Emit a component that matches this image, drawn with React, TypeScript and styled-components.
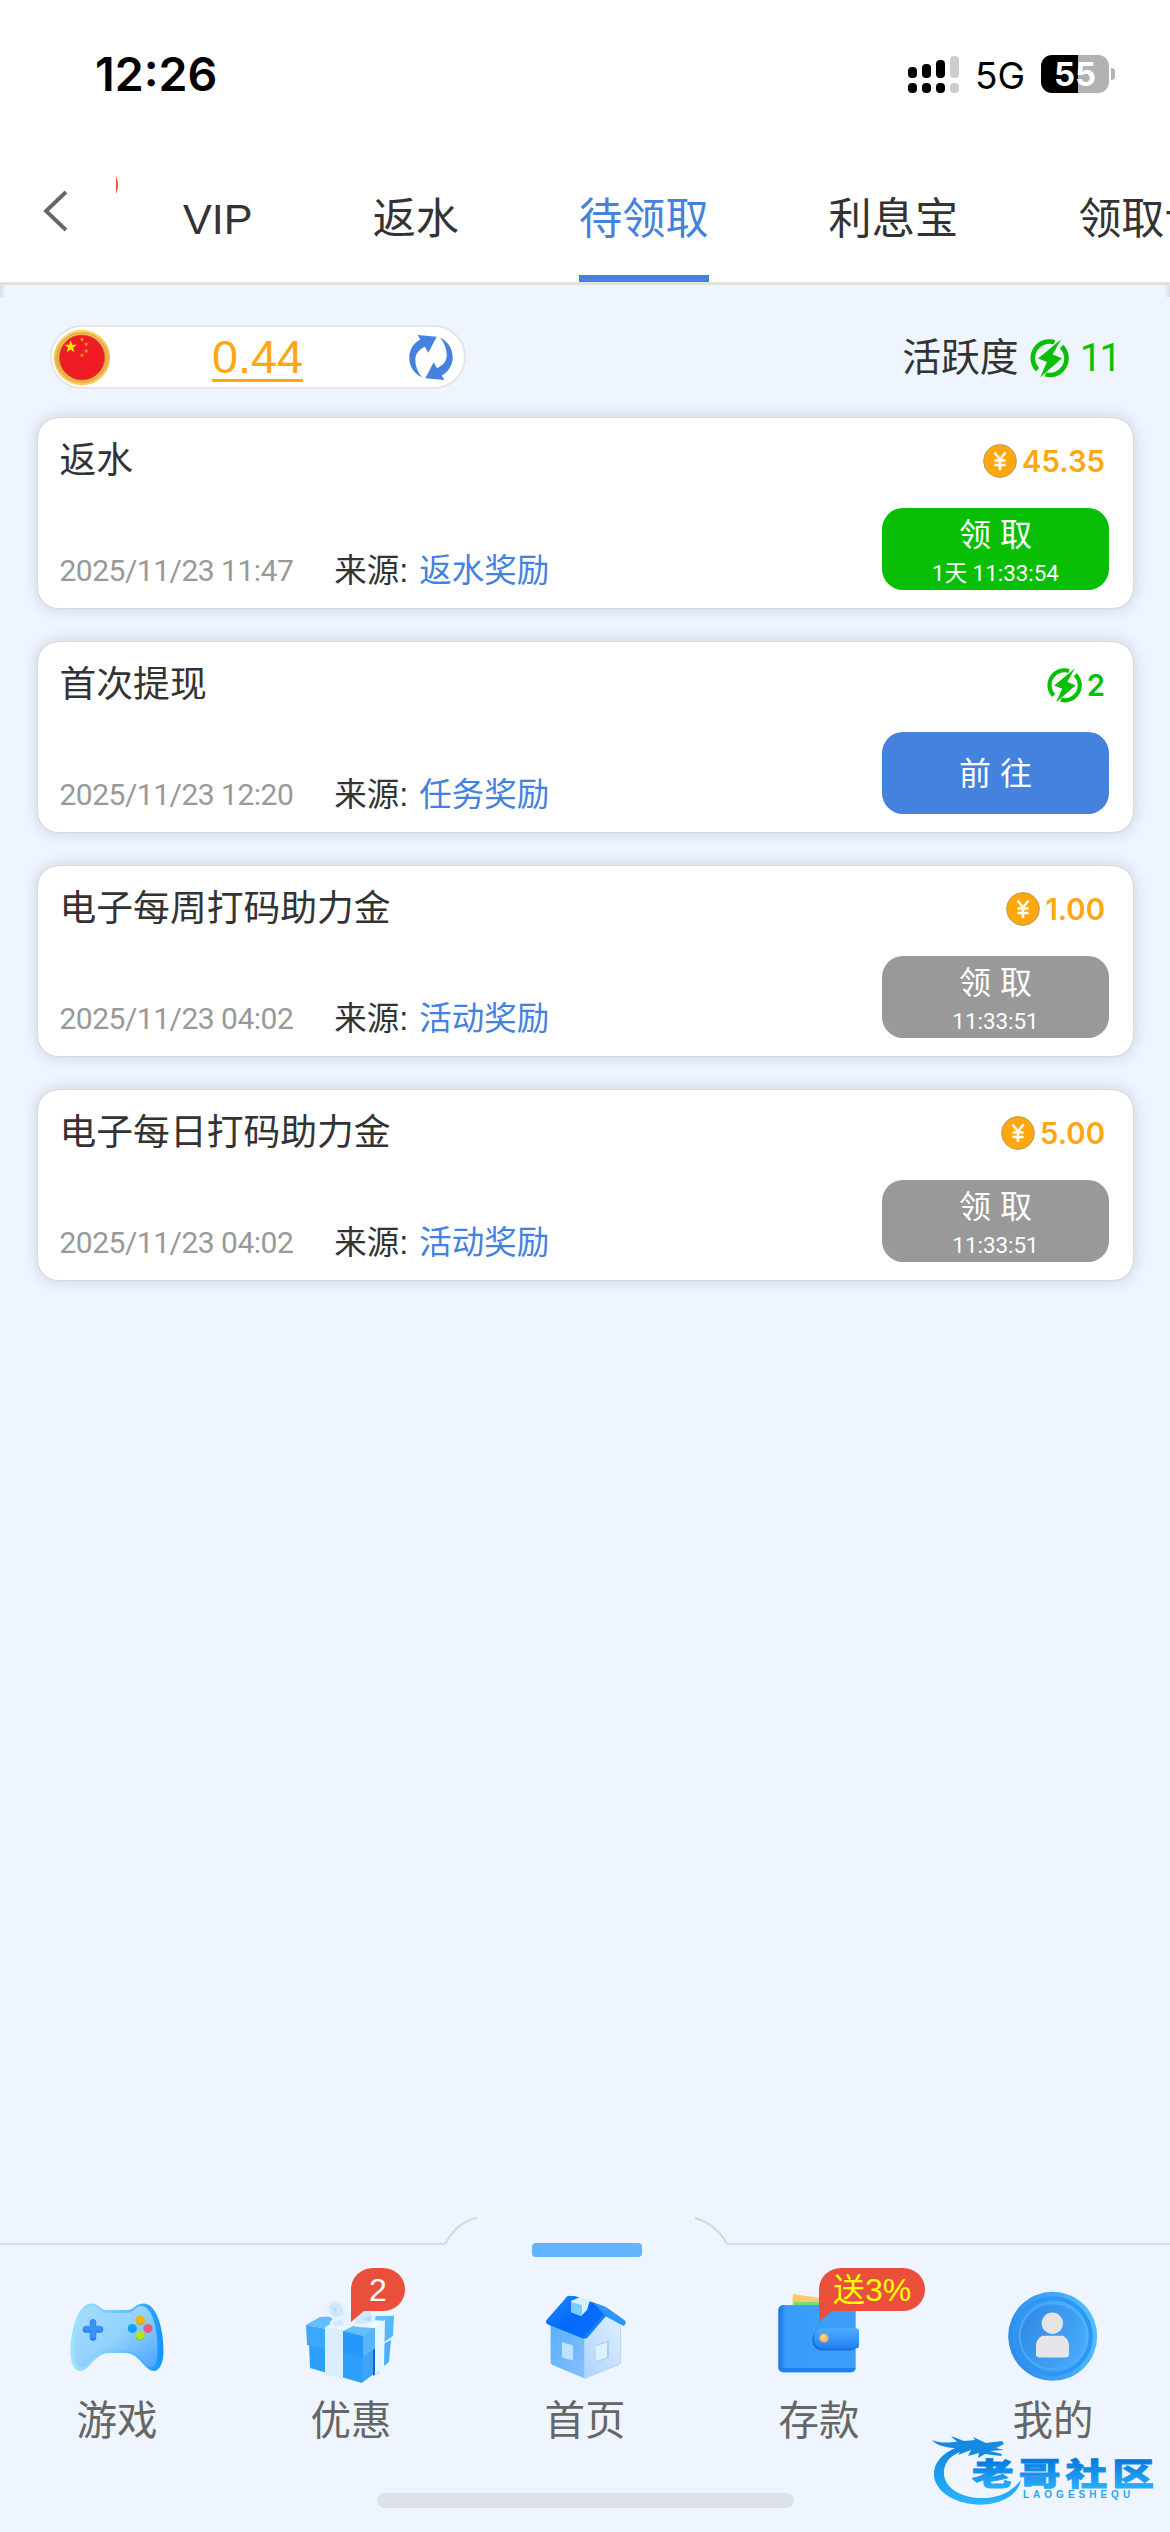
import React from "react"
import styled, { createGlobalStyle } from "styled-components"

type ButtonKind = "claim" | "go" | "disabled"

interface Reward {
  title: string
  date: string
  source: string
  amount: string
  unit: "coin" | "active"
  button: string
  kind: ButtonKind
  countdown?: string
}

const rewards: Reward[] = [
  { title: "返水", date: "2025/11/23 11:47", source: "返水奖励", amount: "45.35", unit: "coin", button: "领 取", kind: "claim", countdown: "1天 11:33:54" },
  { title: "首次提现", date: "2025/11/23 12:20", source: "任务奖励", amount: "2", unit: "active", button: "前 往", kind: "go" },
  { title: "电子每周打码助力金", date: "2025/11/23 04:02", source: "活动奖励", amount: "1.00", unit: "coin", button: "领 取", kind: "disabled", countdown: "11:33:51" },
  { title: "电子每日打码助力金", date: "2025/11/23 04:02", source: "活动奖励", amount: "5.00", unit: "coin", button: "领 取", kind: "disabled", countdown: "11:33:51" },
]

const tabs = ["VIP", "返水", "待领取", "利息宝", "领取记录"]

const buttonColors = { claim: "#08bf05", go: "#4482de", disabled: "#999999" }

const SignalIcon = () => (
  <svg width="52" height="38" viewBox="0 0 52 38">
    <g fill="#000">
      <rect x="0" y="12" width="9" height="11" rx="4" />
      <rect x="14" y="9" width="9" height="14" rx="4" />
      <rect x="28" y="5" width="9" height="18" rx="4" />
      <rect x="0" y="28" width="9" height="10" rx="4" />
      <rect x="14" y="28" width="9" height="10" rx="4" />
      <rect x="28" y="28" width="9" height="10" rx="4" />
    </g>
    <g fill="#ccc">
      <rect x="42" y="1" width="9" height="22" rx="4" />
      <rect x="42" y="28" width="9" height="10" rx="4" />
    </g>
  </svg>
)

const BoltIcon = ({ size }: { size: number }) => (
  <svg width={size} height={size} viewBox="0 0 39 38">
    <g fill="none" stroke="#08bf05" strokeWidth="4.6">
      <path d="M24.500 2.8A16.6 16.6 0 0 0 7.500 30.2" />
      <path d="M31.500 7A16.6 16.6 0 0 1 15.500 34.9" />
    </g>
    <path d="M31 0L8 19L17 22.5L10 38L32 18.8L22.6 15Z" fill="#08bf05" />
  </svg>
)

const CoinIcon = () => (
  <svg width="34" height="34" viewBox="0 0 34 34">
    <circle cx="17" cy="17" r="16.4" fill="#ffa70f" stroke="#b99a5c" strokeWidth="1" />
    <path d="M11.5 8.500L17 15.500L22.5 8.500M17 15.500V26M11.5 16.500H22.5M11.5 21H22.5" fill="none" stroke="#fff" strokeWidth="2.5" />
  </svg>
)

const star = (cx: number, cy: number, r: number) =>
  Array.from({ length: 10 }, (_, i) => {
    const a = (Math.PI / 5) * i - Math.PI / 2
    const d = i % 2 ? r * 0.4 : r
    return `${cx + Math.cos(a) * d},${cy + Math.sin(a) * d}`
  }).join(" ")

const FlagIcon = () => (
  <svg width="56" height="57" viewBox="0 0 56 57">
    <defs>
      <linearGradient id="gold" x1="0" y1="0" x2="0" y2="1">
        <stop offset="0" stopColor="#fbdc72" />
        <stop offset="0.5" stopColor="#f0b64f" />
        <stop offset="1" stopColor="#fbcf62" />
      </linearGradient>
    </defs>
    <circle cx="28" cy="28.5" r="28" fill="url(#gold)" />
    <circle cx="28" cy="28.5" r="24.8" fill="none" stroke="#e8a63f" strokeWidth="1.6" />
    <circle cx="28" cy="28.5" r="22.6" fill="#ef1c25" stroke="#b86a25" strokeWidth="0.9" />
    <g fill="#ffe800">
      <polygon points={star(16.6, 17.8, 6.6)} />
      <polygon points={star(28, 10.6, 2.4)} fill="#f9a01b" />
      <polygon points={star(32.2, 15.2, 2.4)} fill="#f9a01b" />
      <polygon points={star(32.2, 22, 2.4)} fill="#f9a01b" />
      <polygon points={star(28, 26.4, 2.4)} fill="#f9a01b" />
    </g>
  </svg>
)

const refreshArrow = "M13 42.3C4.5 38.5 0.3 31 0.3 22.5C0.3 15 4.5 8 11.3 4.4L8.7 0L27.7 1.7L19.3 17.7L16 11.8C10 14.5 6.4 19 6.3 24.5C6.2 31 8.5 37 13 42.3Z"

const RefreshIcon = () => (
  <svg width="44" height="45" viewBox="0 0 44 45" fill="#4482de">
    <path d={refreshArrow} />
    <path d={refreshArrow} transform="rotate(180 22 22.5)" />
  </svg>
)

const GameIcon = () => (
  <svg width="100" height="100" viewBox="0 0 100 100">
    <defs>
      <linearGradient id="pad" x1="0" y1="0" x2="1" y2="1">
        <stop offset="0" stopColor="#a4defc" />
        <stop offset="0.5" stopColor="#93d2fd" />
        <stop offset="1" stopColor="#4aa6fe" />
      </linearGradient>
      <linearGradient id="padEdge" x1="0" y1="0" x2="1" y2="0">
        <stop offset="0" stopColor="#a2e3fb" />
        <stop offset="0.6" stopColor="#6cc0fd" />
        <stop offset="1" stopColor="#0f93ff" />
      </linearGradient>
    </defs>
    <path d="M24 15.5C32 15.5 33 22 40 22H60C67 22 68 15.5 77 15.5C91 16 97 45 96.500 65C96 76 92 83 87 83C77 83 73 65 58 65H42C28 65 22 83 14 83C7 83 4 76 3.500 66C3 45 10 16 24 15.500Z" fill="url(#padEdge)" />
    <path d="M25 18C32 18 32 25 40 25H60C67 25 68 18 74 18C87 19 91 45 90.500 63C90 74 88 79 84 79C76 79 73 62 58 62H42C27 62 22 79 14 79C9 79 7.500 73 7.500 65C7.500 45 13 19 25 18Z" fill="url(#pad)" />
    <path d="M26 34.500V49.500M19 41.500H33" stroke="#237fea" strokeWidth="6.500" strokeLinecap="round" />
    <path d="M26 34V47.500M19.500 40.500H32.500" stroke="#3a93f4" strokeWidth="5.500" strokeLinecap="round" />
    <circle cx="73.300" cy="32.500" r="4.600" fill="#d6a20e" />
    <circle cx="73.300" cy="31.500" r="4.300" fill="#f2b619" />
    <circle cx="65.300" cy="40.500" r="4.600" fill="#11a2f6" />
    <circle cx="81" cy="40.500" r="4.600" fill="#ec5b80" />
    <circle cx="73.300" cy="48" r="4.600" fill="#86cc20" />
    <circle cx="73.300" cy="47" r="4.200" fill="#b3e61f" />
  </svg>
)

const GiftIcon = () => (
  <svg width="100" height="100" viewBox="0 0 100 100">
    <path d="M8 55L61 67V95L9 80Z" fill="#2c9ffb" />
    <path d="M61 67L90 52L88 74L61 95Z" fill="#49aefc" />
    <path d="M61 67L74 60V85L61 94Z" fill="#3da4f7" />
    <path d="M72 61L78 57V84L72 88Z" fill="#1267d8" />
    <path d="M5 37L19 29L42 28L93 28L70 45L62 48Z" fill="#62bdfd" />
    <path d="M5 37L62 48V68L6 57Z" fill="#3aa8ff" />
    <path d="M41 43L62 48V70L41 64Z" fill="#2599fb" />
    <path d="M62 48L93 27L92 48L62 69Z" fill="#57b5fb" />
    <path d="M24 39L42 43V91L24 86Z" fill="#dceefe" />
    <path d="M74 40L84 32L83 79L74 87Z" fill="#e6f6ff" />
    <path d="M24 39L40 31L58 35L42 43Z" fill="#eef8ff" />
    <path d="M57 39L72 32L84 33L74 40Z" fill="#f2faff" />
    <g fill="#cfe8fc" stroke="#e6f4fe" strokeWidth="3">
      <path d="M42 31C28 33 23 20 29 14C36 9 45 16 44 27Z" />
      <path d="M52 32C57 20 68 18 72 26C76 33 67 39 54 37Z" />
      <path d="M41 29C34 31 28 34 31 38C37 42 48 36 52 32Z" />
    </g>
    <path d="M31 19L36 20L35 26Z" fill="#b2dbf9" />
    <path d="M62 31L70 27L70 34Z" fill="#b0dbf9" />
    <circle cx="48" cy="31" r="7" fill="#e4f3fe" />
  </svg>
)

const HomeIcon = () => (
  <svg width="100" height="100" viewBox="0 0 100 100">
    <defs>
      <linearGradient id="wallL" x1="0" y1="0" x2="1" y2="1">
        <stop offset="0" stopColor="#57b1fb" />
        <stop offset="1" stopColor="#86bfff" />
      </linearGradient>
      <linearGradient id="wallR" x1="0" y1="1" x2="1" y2="0">
        <stop offset="0" stopColor="#afd3ff" />
        <stop offset="1" stopColor="#def0ff" />
      </linearGradient>
      <linearGradient id="roof" x1="0" y1="0" x2="1" y2="1">
        <stop offset="0" stopColor="#1f8bff" />
        <stop offset="0.5" stopColor="#0568fb" />
        <stop offset="1" stopColor="#0a73fa" />
      </linearGradient>
    </defs>
    <path d="M15.600 36L49.700 49V90.500L17.500 77Q15.600 76 15.600 74Z" fill="url(#wallL)" />
    <path d="M49.700 49L69 26L85.600 36V73Q85.600 76 83 77L49.700 90.500Z" fill="url(#wallR)" />
    <path d="M49.700 90.500L83 77Q85.600 76 85.600 73V38" fill="none" stroke="#bad5f0" strokeWidth="1" />
    <path d="M27 54L38 57.500V72.500L27 69.500Z" fill="#bfe3fe" />
    <path d="M61 57L74 52.500V70L61 74.500Z" fill="#a9cefa" />
    <path d="M61 58L72 54.500V69.500L61 73Z" fill="#def1ff" />
    <path d="M36 8Q32 7 30 11L11.500 32Q10 35 13 36.500L48 50.500Q50 51 52 49L70 27.500L68 18L40 8Z" fill="url(#roof)" />
    <path d="M58 15L67 17.500Q69 18 71 19L90 32.500Q92 36 88.500 38L70 28Q66 22 58 15Z" fill="#2c95fb" />
    <path d="M51 49L69.500 27.500" stroke="#1f7dfb" strokeWidth="3" strokeLinecap="round" />
    <path d="M36 13L45 9L55 12L52 22L46 28L36 24Z" fill="#d7f1ff" />
    <path d="M36 14L47 17V28L36 24Z" fill="#7ccbff" />
  </svg>
)

const WalletIcon = () => (
  <svg width="100" height="100" viewBox="0 0 100 100">
    <defs>
      <linearGradient id="wallet" x1="0" y1="0" x2="1" y2="0">
        <stop offset="0" stopColor="#1473e8" />
        <stop offset="0.1" stopColor="#3a9dfb" />
        <stop offset="1" stopColor="#3d9dfb" />
      </linearGradient>
      <linearGradient id="strap" x1="0" y1="0" x2="0" y2="1">
        <stop offset="0" stopColor="#4fabff" />
        <stop offset="1" stopColor="#2180f2" />
      </linearGradient>
    </defs>
    <path d="M24 6L58 11V22H23Z" fill="#ffc86b" />
    <path d="M25 14H80V22H23Z" fill="#74df78" />
    <rect x="9.300" y="17" width="77.400" height="67.500" rx="5" fill="url(#wallet)" />
    <path d="M11 80Q12 84 16 84H82Q86 84 86.500 80Z" fill="#1f7fee" />
    <rect x="43.500" y="42" width="46" height="20.500" rx="9" fill="#176ee0" />
    <path d="M54 40.300H87Q90 40.300 90 44V57Q90 60.500 87 60.500H54Q45 60 45 50.500Q45 41 54 40.300Z" fill="url(#strap)" />
    <circle cx="55" cy="50" r="4.600" fill="#f1b363" />
    <circle cx="54.300" cy="49.300" r="2.600" fill="#ffcf8c" />
  </svg>
)

const ProfileIcon = () => (
  <svg width="100" height="100" viewBox="0 0 100 100">
    <defs>
      <linearGradient id="ring" x1="0" y1="0.300" x2="1" y2="0.100">
        <stop offset="0" stopColor="#2f8eea" />
        <stop offset="0.600" stopColor="#44abfb" />
        <stop offset="1" stopColor="#53c4fb" />
      </linearGradient>
      <linearGradient id="disc" x1="0" y1="0" x2="1" y2="0.500">
        <stop offset="0" stopColor="#2e87e3" />
        <stop offset="1" stopColor="#46a7f8" />
      </linearGradient>
    </defs>
    <circle cx="49.700" cy="48.300" r="44.500" fill="url(#ring)" />
    <circle cx="49.700" cy="48.300" r="38" fill="none" stroke="#2f95f4" strokeWidth="4" />
    <circle cx="49.700" cy="48.300" r="33" fill="url(#disc)" stroke="#49acf9" strokeWidth="2" />
    <path d="M39 47.700H60Q66 51 66 58V66Q66 69.500 62.500 69.500H36.500Q33 69.500 33 66V58Q33 51 39 47.700Z" fill="#e6e6e8" />
    <circle cx="49.300" cy="35.300" r="10.700" fill="#e4e4e6" />
  </svg>
)

const Watermark = () => (
  <WatermarkSvg width="230" height="80" viewBox="0 0 230 80">
    <defs>
      <linearGradient id="mark" gradientUnits="userSpaceOnUse" x1="0" y1="8" x2="0" y2="74">
        <stop offset="0" stopColor="#0a7fe0" />
        <stop offset="1" stopColor="#2bb4fb" />
      </linearGradient>
      <linearGradient id="markText" gradientUnits="userSpaceOnUse" x1="0" y1="30" x2="0" y2="58">
        <stop offset="0" stopColor="#0879de" />
        <stop offset="1" stopColor="#28aefa" />
      </linearGradient>
    </defs>
    <path d="M37 14C14 20 3 32 4 46C6 64 30 76 54 74.500C74 73 88 64 91 50C83 60 72 67 56 68C34 69 16 60 14 45C13 31 24 20 44 20Z" fill="url(#mark)" />
    <path d="M2 10C12 14 20 12 27 12L21 6L34 11L45 10L43 7L56 13L72 11L74 14L66 18L74 20L60 21L72 24L71 26L55 24L48 28L49 23L38 26L41 20L28 25L33 18L22 18C14 17 6 15 2 10Z" fill="#158ae2" />
    <MarkName x="31" y="55.500" transform="scale(1.35 1)" fill="url(#markText)" stroke="url(#markText)">老哥社区</MarkName>
    <MarkLatin x="93" y="68">LAOGESHEQU</MarkLatin>
  </WatermarkSvg>
)

const navItems = [
  { label: "游戏", icon: <GameIcon /> },
  { label: "优惠", icon: <GiftIcon />, badge: "2" },
  { label: "首页", icon: <HomeIcon /> },
  { label: "存款", icon: <WalletIcon />, badge: "送3%", gold: true },
  { label: "我的", icon: <ProfileIcon /> },
]

const RewardCard = ({ reward }: { reward: Reward }) => (
  <Card>
    <CardMain>
      <CardTitle>{reward.title}</CardTitle>
      <CardMeta>
        <CardDate>{reward.date}</CardDate>
        <span>来源:</span>
        <SourceLink>{reward.source}</SourceLink>
      </CardMeta>
    </CardMain>
    <CardSide>
      <Amount $active={reward.unit === "active"}>
        {reward.unit === "coin" ? <CoinIcon /> : <BoltIcon size={35} />}
        {reward.amount}
      </Amount>
      <ActionButton $kind={reward.kind}>
        <ActionText>{reward.button}</ActionText>
        {reward.countdown && <Countdown>{reward.countdown}</Countdown>}
      </ActionButton>
    </CardSide>
  </Card>
)

const App = () => (
  <>
    <GlobalStyle />
    <Page>
      <StatusBar>
        <Clock>12:26</Clock>
        <StatusIcons>
          <SignalIcon />
          <Network>5G</Network>
          <Battery>55</Battery>
        </StatusIcons>
      </StatusBar>

      <TabBar>
        <BackButton>
          <svg width="26" height="42" viewBox="0 0 26 42" fill="none" stroke="#666" strokeWidth="3.8">
            <path d="M23 2L3 21L23 40" />
          </svg>
        </BackButton>
        <TabScroller>
          <HiddenBadge />
          {tabs.map(t => <Tab key={t} $active={t === "待领取"}>{t}</Tab>)}
        </TabScroller>
      </TabBar>

      <Content>
        <Summary>
          <Balance>
            <FlagIcon />
            <BalanceValue>0.44</BalanceValue>
            <RefreshIcon />
          </Balance>
          <Activity>
            <span>活跃度</span>
            <BoltIcon size={39} />
            <ActivityValue>11</ActivityValue>
          </Activity>
        </Summary>
        {rewards.map(r => <RewardCard reward={r} key={r.title} />)}
      </Content>

      <NavBar>
        <Hump width="282" height="28" viewBox="0 0 282 28" fill="none">
          <path d="M0 27C7 14 17 4 32 1" stroke="#d3d8e2" strokeWidth="2" />
          <path d="M32 1H250" stroke="#f5f9ff" strokeWidth="1" />
          <path d="M250 1C264 5 275 14 282 27" stroke="#d3d8e2" strokeWidth="2" />
        </Hump>
        <ActiveMark />
        {navItems.map(n => (
          <NavItem key={n.label}>
            {n.icon}
            <NavLabel>{n.label}</NavLabel>
            {n.badge && <NavBadge $gold={n.gold}>{n.badge}</NavBadge>}
          </NavItem>
        ))}
        <HomeIndicator />
        <Watermark />
      </NavBar>
    </Page>
  </>
)

export default App


const GlobalStyle = createGlobalStyle`
  * {
    box-sizing: border-box;
  }
  body {
    margin: 0;
    background: #eff5ff;
    font-family: "Liberation Sans", "Noto Sans CJK SC", sans-serif;
    color: #333;
  }
  svg {
    display: block;
    flex: none;
  }
`
const Page = styled.div`
  display: flex;
  flex-direction: column;
  width: 1170px;
  height: 2532px;
  overflow: hidden;
`
const StatusBar = styled.header`
  display: flex;
  justify-content: space-between;
  align-items: center;
  height: 148px;
  padding: 0 56px 0 95px;
  background: #fff;
  color: #000;
  font-family: Inter, sans-serif;
`
const Clock = styled.div`
  font-size: 46.6px;
  font-weight: 600;
  line-height: 56px;
`
const StatusIcons = styled.div`
  display: flex;
  align-items: center;
`
const Network = styled.span`
  margin: 3px 16px 0 15px;
  font-size: 37px;
  line-height: 40px;
`
const Battery = styled.div`
  position: relative;
  width: 68px;
  height: 38px;
  margin-right: 5px;
  border-radius: 11px;
  background: linear-gradient(90deg, #000 54%, #b2b2b2 54%);
  color: #fff;
  font-size: 33px;
  font-weight: 700;
  line-height: 39px;
  text-align: center;

  &::after {
    content: "";
    position: absolute;
    right: -6px;
    top: 13px;
    width: 4px;
    height: 12px;
    border-radius: 0 4px 4px 0;
    background: #b2b2b2;
  }
`
const TabBar = styled.nav`
  display: flex;
  height: 137px;
  border-bottom: 3px solid #e1e1e1;
  background: #fff;
`
const BackButton = styled.div`
  width: 116px;
  padding: 42px 0 0 43px;
`
const TabScroller = styled.div`
  flex: 1;
  display: flex;
  gap: 120px;
  position: relative;
  padding-left: 67px;
  overflow: hidden;
`
const HiddenBadge = styled.i`
  position: absolute;
  left: -40px;
  top: 16px;
  width: 41.5px;
  height: 42px;
  border-radius: 21px;
  background: #e94f3d;
`
const Tab = styled.div<{ $active: boolean }>`
  flex: none;
  height: 134px;
  border-bottom: 7px solid ${p => p.$active ? "#4482de" : "transparent"};
  color: ${p => p.$active ? "#4482de" : "#333"};
  font-size: 43.2px;
  line-height: 143px;
`
const Content = styled.main`
  flex: 1;
  padding: 40px 37.5px 0;
  background:
    linear-gradient(90deg, #d9dde6, #eff5ff) 0 0 / 6px 12px no-repeat,
    linear-gradient(270deg, #d9dde6, #eff5ff) 100% 0 / 6px 12px no-repeat,
    #eff5ff;
`
const Summary = styled.div`
  display: flex;
  justify-content: space-between;
  align-items: center;
  height: 64px;
  margin-bottom: 29px;
  padding: 0 13px 0 12px;
`
const Balance = styled.div`
  display: flex;
  justify-content: space-between;
  align-items: center;
  width: 416px;
  height: 64px;
  padding: 0 11px 0 2px;
  border: 2px solid #e5e5e5;
  border-radius: 32px;
  background: #fff;
`
const BalanceValue = styled.span`
  margin: 2px 3px 0 0;
  border-bottom: 3px solid #ffa70f;
  color: #ffa70f;
  font-size: 46.8px;
  line-height: 44px;
`
const Activity = styled.div`
  display: flex;
  align-items: center;
  padding-top: 2px;
  font-size: 38.8px;
  line-height: 60px;

  svg {
    margin: 0 11px 0 11px;
  }
`
const ActivityValue = styled.span`
  color: #08bf05;
  font-family: Roboto, sans-serif;
  font-size: 39px;
  letter-spacing: -2px;
`
const Card = styled.section`
  display: flex;
  justify-content: space-between;
  height: 190px;
  margin-bottom: 34px;
  padding: 20px 23.5px 18px 22px;
  border-radius: 20px;
  background: #fff;
  box-shadow: 0 0 1px 0 rgba(0, 0, 0, 0.35), 0 0 15px 1px rgba(0, 0, 0, 0.15);
`
const CardMain = styled.div`
  display: flex;
  flex-direction: column;
  justify-content: space-between;
  margin-bottom: -1px;
`
const CardTitle = styled.h3`
  margin: 0;
  font-size: 36.8px;
  font-weight: 400;
  line-height: 46px;
`
const CardMeta = styled.div`
  display: flex;
  font-size: 32.5px;
  line-height: 40px;
`
const CardDate = styled.span`
  margin-right: 41px;
  color: #999;
  font-family: Roboto, sans-serif;
  font-size: 30px;
  letter-spacing: -0.5px;
`
const SourceLink = styled.span`
  margin-left: 11px;
  color: #4482de;
`
const CardSide = styled.div`
  display: flex;
  flex-direction: column;
  align-items: flex-end;
  justify-content: space-between;
`
const Amount = styled.div<{ $active: boolean }>`
  display: flex;
  align-items: center;
  gap: 5px;
  height: 46px;
  padding-right: 4px;
  color: ${p => p.$active ? "#08bf05" : "#ffa70f"};
  font-family: Inter, sans-serif;
  font-size: 29.3px;
  font-weight: 600;
`
const ActionButton = styled.button<{ $kind: ButtonKind }>`
  display: flex;
  flex-direction: column;
  align-items: center;
  justify-content: center;
  width: 227px;
  height: 82px;
  padding: 0;
  border: 0;
  border-radius: 21px;
  background: ${p => buttonColors[p.$kind]};
  color: #fff;
  font-family: inherit;
`
const ActionText = styled.span`
  margin-top: 2px;
  font-size: 32px;
  line-height: 41px;
`
const Countdown = styled.span`
  margin-bottom: -4px;
  font-family: Roboto, "Noto Sans CJK SC", sans-serif;
  font-size: 22.4px;
  line-height: 34px;
`
const NavBar = styled.footer`
  position: relative;
  display: flex;
  height: 289px;
  border-top: 2px solid #d6dbe6;
  background: #eff5ff;
`
const Hump = styled.svg`
  position: absolute;
  left: 445px;
  top: -28px;
  background: linear-gradient(#eff5ff, #eff5ff) 0 100% / 100% 3px no-repeat;
  overflow: visible;
`
const ActiveMark = styled.div`
  position: absolute;
  left: 532px;
  top: -2px;
  width: 110px;
  height: 14px;
  border-radius: 4px;
  background: #62b4ff;
`
const NavItem = styled.div`
  position: relative;
  flex: 1;
  display: flex;
  flex-direction: column;
  align-items: center;
  padding-top: 43px;
`
const NavLabel = styled.span`
  margin-top: 3px;
  color: #666;
  font-size: 40.5px;
  line-height: 60px;
`
const NavBadge = styled.span<{ $gold?: boolean }>`
  position: absolute;
  left: 50%;
  top: 23px;
  height: 43px;
  min-width: 54px;
  padding: 0 14px;
  border-radius: 22px 22px 22px 0;
  background: #ea4f3c;
  color: ${p => p.$gold ? "#ffff00" : "#fff"};
  font-size: 32px;
  line-height: 44px;
  text-align: center;
  white-space: nowrap;

  &::after {
    content: "";
    position: absolute;
    left: 0;
    top: 42px;
    border-top: 12px solid #ea4f3c;
    border-right: 14px solid transparent;
  }
`
const HomeIndicator = styled.div`
  position: absolute;
  left: 377px;
  bottom: 24px;
  width: 417px;
  height: 15px;
  border-radius: 8px;
  background: #dde1ea;
`
const WatermarkSvg = styled.svg`
  position: absolute;
  left: 930px;
  bottom: 22px;
`
const MarkName = styled.text`
  font-family: "Noto Sans CJK SC", sans-serif;
  font-size: 31px;
  font-weight: 900;
  letter-spacing: 3.7px;
  stroke-width: 0.8px;
`
const MarkLatin = styled.text`
  fill: #2ba6f5;
  font-family: "Liberation Sans", sans-serif;
  font-size: 10px;
  font-weight: 700;
  letter-spacing: 4px;
`
